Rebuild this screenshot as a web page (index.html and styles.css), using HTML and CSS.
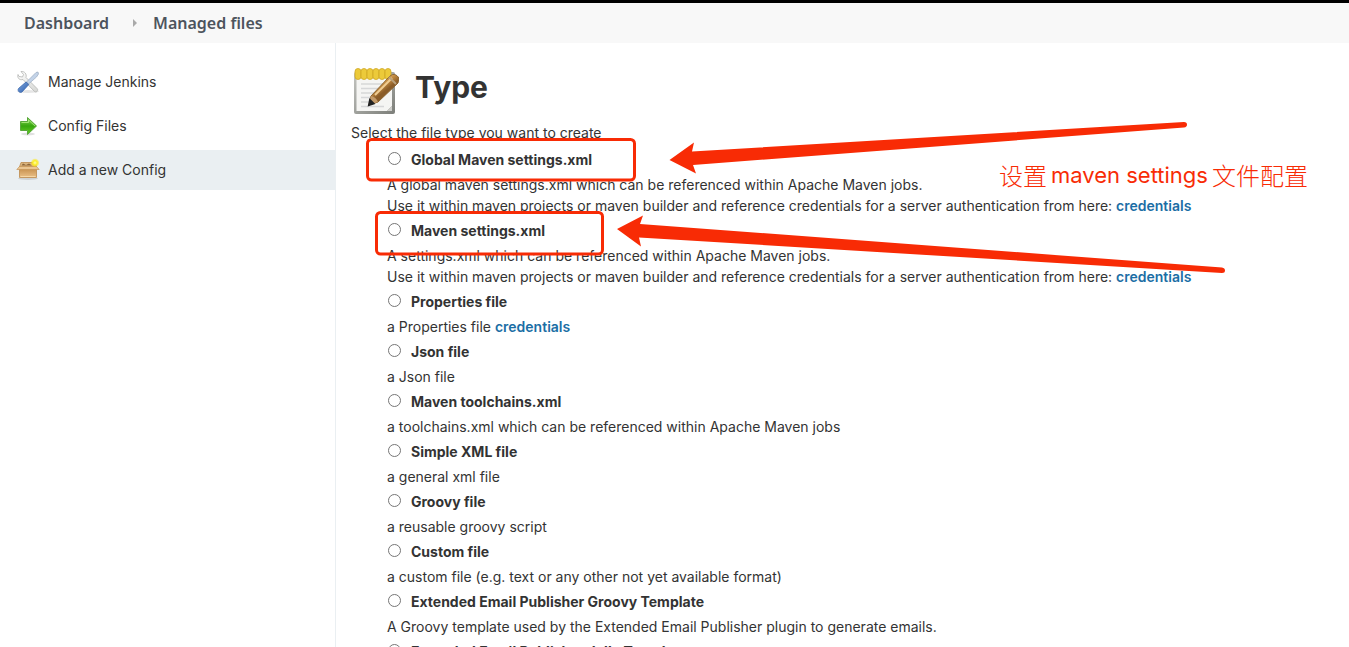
FILE: index.html
```html
<!DOCTYPE html>
<html lang="en">
<head>
<meta charset="utf-8">
<title>Managed files</title>
<link rel="stylesheet" href="styles.css">
</head>
<body>
<div class="page">
<nav class="breadcrumbs" aria-label="Breadcrumb">
  <a href="#">Dashboard</a>
  <svg class="separator" viewBox="0 0 4 8" aria-hidden="true"><path d="M0 0L4 4L0 8Z" fill="#aaa"/></svg>
  <a href="#">Managed files</a>
</nav>
<div class="columns">
  <aside class="tasks">
    <a class="task" href="#">
      <svg viewBox="0 0 24 24" aria-hidden="true">
        <defs>
          <linearGradient id="blade" x2="1" y2="1"><stop stop-color="#fff"/><stop offset="1" stop-color="#d5d6d3"/></linearGradient>
          <linearGradient id="handle" x2="1" y2="1"><stop stop-color="#7fa8df"/><stop offset="1" stop-color="#2c5cab"/></linearGradient>
        </defs>
        <ellipse cx="12" cy="21.500" rx="11" ry="1.500" fill="#000" opacity=".1"/>
        <path d="M5 1.500L7.500 4.500L6.500 7L3 6.500L2 4.500C1 8 3.500 10.500 7 9.500L18.500 21.500C20 23 23 20.500 21 18.500L10 7.500C11 4 8.500 1 5 1.500Z" fill="url(#blade)" stroke="#b4b5b3" stroke-width=".8"/>
        <path d="M20 2.500L22 2L22.500 4L20.500 7L12.500 14L10.500 12L17.500 5Z" fill="#c3d3e8" stroke="#9aabc0" stroke-width=".7"/>
        <path d="M10 12L12.800 14.500L6 22C4 23.500 1 21 2.500 18.500Z" fill="url(#handle)" stroke="#3d69ad" stroke-width=".8"/>
      </svg>
      <span>Manage Jenkins</span>
    </a>
    <a class="task" href="#">
      <svg viewBox="0 0 24 24" aria-hidden="true">
        <defs><linearGradient id="green" x2="0" y2="1"><stop stop-color="#8bd65c"/><stop offset=".5" stop-color="#37a60e"/><stop offset="1" stop-color="#66ce25"/></linearGradient></defs>
        <ellipse cx="12" cy="20" rx="7" ry="1.500" fill="#000" opacity=".12"/>
        <path d="M4.500 7.500H11.500V3.500L20.500 12L11.500 20.500V16.500H4.500Z" fill="url(#green)" stroke="#5aa83c"/>
        <path d="M5.500 8.500H12.500V6L19 12" fill="none" stroke="#b5ef88" stroke-width=".8"/>
      </svg>
      <span>Config Files</span>
    </a>
    <a class="task task-active" href="#" aria-current="page">
      <svg viewBox="0 0 24 24" aria-hidden="true">
        <defs>
          <linearGradient id="box" x2="0" y2="1"><stop stop-color="#c08743"/><stop offset="1" stop-color="#ebc188"/></linearGradient>
          <radialGradient id="glow"><stop stop-color="#fffdb0"/><stop offset=".5" stop-color="#fcee25"/><stop offset="1" stop-color="#ffe500" stop-opacity=".15"/></radialGradient>
        </defs>
        <ellipse cx="12" cy="20.500" rx="10" ry="1.500" fill="#000" opacity=".12"/>
        <path d="M3.500 9L5 4.500H19L20.500 9Z" fill="#dcb57e" stroke="#bd8a4e" stroke-width=".8"/>
        <path d="M5.500 7.500L7 5.500L10 7L13 5.500L16 7.500Z" fill="#8c6538"/>
        <path d="M3.500 9H20.500V19.500H3.500Z" fill="url(#box)" stroke="#bd8a4e" stroke-width=".8"/>
        <path d="M3.500 8.500L.8 11.500H20L23.200 11.500L20.500 8.500Z" fill="#ebc692" stroke="#c69558" stroke-width=".7"/>
        <path d="M4.500 18.500H19.500" stroke="#f6d7a4"/>
        <circle cx="19" cy="4.800" r="4.300" fill="url(#glow)"/>
      </svg>
      <span>Add a new Config</span>
    </a>
  </aside>
  <main class="content">
    <h1 class="title">
      <svg viewBox="0 0 48 48" aria-hidden="true">
        <defs>
          <linearGradient id="frame" x2="1" y2="1"><stop stop-color="#c4c5c1"/><stop offset="1" stop-color="#7c7e79"/></linearGradient>
          <linearGradient id="pencil" gradientUnits="userSpaceOnUse" x1="27" y1="15" x2="34" y2="24"><stop stop-color="#e6bd79"/><stop offset=".45" stop-color="#c58c42"/><stop offset="1" stop-color="#8a5c28"/></linearGradient>
        </defs>
        <rect x="3" y="5" width="41" height="42" rx="2" fill="url(#frame)"/>
        <path d="M5.500 8H41V39L36 44H5.500Z" fill="#f5f5f3"/>
        <path d="M41 39V44H36Z" fill="#cfcfcb"/>
        <path d="M10 17H34M10 21.500H32M10 26H28M10 30.500H24M10 35H22M10 39.500H33" stroke="#d6d7d8" stroke-width="1.500"/>
        <path d="M5 4H40V10H5Z" fill="#dcb62a"/>
        <g fill="#ecca3a" stroke="#cfa722" stroke-width=".8">
          <rect x="4" y="1.500" width="6" height="11" rx="3"/><rect x="10" y="1.500" width="6" height="11" rx="3"/><rect x="16" y="1.500" width="6" height="11" rx="3"/><rect x="22" y="1.500" width="6" height="11" rx="3"/><rect x="28" y="1.500" width="6" height="11" rx="3"/><rect x="34" y="1.500" width="6" height="11" rx="3"/>
        </g>
        <path d="M18 38L20 29L39 9Q44 5 48 11L47 16L27 35Z" fill="url(#pencil)" stroke="#8a6330"/>
        <path d="M18 38L20 29Q25 30 27 35Z" fill="#c39a69"/>
        <path d="M18 38L19 33L22.500 36.500Z" fill="#222" stroke="#222" stroke-width="2"/>
        <path d="M24 28L41 11" stroke="#f0cd92" stroke-width="2"/>
        <path d="M38 10L45 17" stroke="#b9a07a" stroke-width="2"/>
      </svg>
      <span>Type</span>
    </h1>
    <form class="types">
      <fieldset class="type-set">
      <legend class="intro">Select the file type you want to create</legend>
      <div class="type"><input type="radio" name="type" id="t1"><label for="t1">Global Maven settings.xml</label>
        <p>A global maven settings.xml which can be referenced within Apache Maven jobs.<br>Use it within maven projects or maven builder and reference credentials for a server authentication from here: <a href="#">credentials</a></p></div>
      <div class="type"><input type="radio" name="type" id="t2"><label for="t2">Maven settings.xml</label>
        <p>A settings.xml which can be referenced within Apache Maven jobs.<br>Use it within maven projects or maven builder and reference credentials for a server authentication from here: <a href="#">credentials</a></p></div>
      <div class="type"><input type="radio" name="type" id="t3"><label for="t3">Properties file</label>
        <p>a Properties file <a href="#">credentials</a></p></div>
      <div class="type"><input type="radio" name="type" id="t4"><label for="t4">Json file</label>
        <p>a Json file</p></div>
      <div class="type"><input type="radio" name="type" id="t5"><label for="t5">Maven toolchains.xml</label>
        <p>a toolchains.xml which can be referenced within Apache Maven jobs</p></div>
      <div class="type"><input type="radio" name="type" id="t6"><label for="t6">Simple XML file</label>
        <p>a general xml file</p></div>
      <div class="type"><input type="radio" name="type" id="t7"><label for="t7">Groovy file</label>
        <p>a reusable groovy script</p></div>
      <div class="type"><input type="radio" name="type" id="t8"><label for="t8">Custom file</label>
        <p>a custom file (e.g. text or any other not yet available format)</p></div>
      <div class="type"><input type="radio" name="type" id="t9"><label for="t9">Extended Email Publisher Groovy Template</label>
        <p>A Groovy template used by the Extended Email Publisher plugin to generate emails.</p></div>
      <div class="type"><input type="radio" name="type" id="t10"><label for="t10">Extended Email Publisher Jelly Template</label></div>
      </fieldset>
    </form>
  </main>
</div>
<svg class="marks" aria-hidden="true">
  <g fill="none" stroke="#f82b05" stroke-width="3">
    <rect x="367.500" y="139.500" width="267" height="40.500" rx="4"/>
    <rect x="376.500" y="212.500" width="226" height="41.500" rx="4"/>
  </g>
  <g fill="#f82b05">
    <path d="M669.500 160L694 142.500L692 151.500L1184 122Q1187 122 1187 124.700Q1187 127 1184 127.500L693 165L696 173.500Z"/>
    <path d="M617 229L643 215.500L640 224L1222 267.500Q1225 268 1225 270.500Q1225 273 1222 273L639 237.500L641 246.500Z"/>
  </g>
</svg>
<p class="note">设置<span>maven settings</span>文件配置</p>
</div>
</body>
</html>
```
FILE: styles.css
```css
* { box-sizing: border-box; }
body {
  margin: 0;
  background: #fff;
  color: #333;
  font: 14px/21px Inter, "Noto Sans CJK SC", sans-serif;
}
a { color: #1b6ea5; font-weight: 600; text-decoration: none; }
.page {
  position: relative;
  display: flex;
  flex-direction: column;
  height: 100vh;
  overflow: hidden;
  border-top: 3px solid #000;
}
.breadcrumbs {
  display: flex;
  flex: none;
  align-items: center;
  height: 40px;
  padding: 0 24px;
  background: #f8f8f8;
  font-family: "Noto Sans", sans-serif;
  font-size: 16px;
}
.breadcrumbs a { color: #4d545d; }
.separator { width: 4px; height: 8px; margin: 0 16px 0 24px; }
.columns { display: flex; flex: 1; min-height: 0; }
.tasks {
  display: flex;
  flex: none;
  flex-direction: column;
  gap: 4px;
  width: 336px;
  padding-top: 19px;
  border-right: 1px solid #eaeff2;
}
.task {
  display: flex;
  align-items: center;
  gap: 8px;
  height: 40px;
  padding: 0 16px;
  color: #333;
  font-weight: 400;
}
.task svg { width: 24px; height: 24px; }
.task span { padding-bottom: 2px; }
.task-active { background: #eaeff2; }
.content { flex: 1; min-width: 0; padding: 24px 15px 0; }
.title {
  display: flex;
  gap: 16px;
  height: 55px;
  margin: 0;
  font-size: 30px;
  line-height: 40px;
}
.title svg { width: 48px; height: 48px; }
.type-set { min-width: 0; margin: 0; padding: 0; border: 0; }
.intro { margin-bottom: 2px; padding: 0; }
.type {
  display: grid;
  grid-template-columns: 24px 1fr;
  align-items: center;
  padding-left: 36px;
}
.type input {
  appearance: none;
  width: 13px;
  height: 13px;
  margin: 0 0 3px 1px;
  border: 1px solid #767676;
  border-radius: 50%;
  background: #fff;
}
.type label { font-weight: 700; line-height: 29px; }
.type p { grid-column: 1 / 3; margin: 0; }
.marks {
  position: absolute;
  top: -3px;
  left: 0;
  width: 100%;
  height: 100vh;
  pointer-events: none;
}
.note {
  position: absolute;
  top: 154px;
  left: 999px;
  display: flex;
  gap: 4px;
  margin: 0;
  color: #f82b05;
  font-family: "Noto Sans CJK SC", sans-serif;
  font-size: 24px;
  font-weight: 300;
  line-height: 36px;
  white-space: nowrap;
}
.note span { font-family: Inter, sans-serif; font-size: 22px; font-weight: 400; }
```
